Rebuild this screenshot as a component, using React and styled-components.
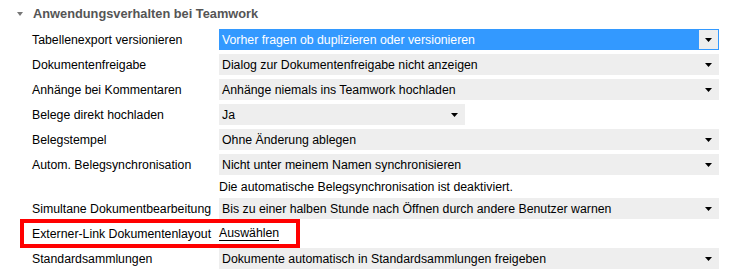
import React from "react";
import styled, { createGlobalStyle } from "styled-components";

const Global = createGlobalStyle`
  html, body { margin: 0; padding: 0; background: #fff; }
  body { font-family: "Liberation Sans", Arial, sans-serif; font-size: 12.3px; color: #000; }
`;

const Page = styled.div`
  width: 731px;
  height: 280px;
  overflow: hidden;
  background: #fff;
`;

const Header = styled.div`
  display: flex;
  align-items: center;
  height: 27px;
  padding-left: 17px;
  gap: 10px;
  font-weight: bold;
  font-size: 12.8px;
  color: #555;
`;

const Caret = styled.svg`
  width: 6px;
  height: 4px;
  flex: none;
`;

const Form = styled.div`
  display: grid;
  grid-template-columns: 187px 500px;
  row-gap: 4px;
  padding-left: 32px;
  padding-top: 2px;
`;

const Label = styled.div`
  height: 21px;
  display: flex;
  align-items: center;
  white-space: nowrap;
`;

const Select = styled.div`
  height: 21px;
  box-sizing: border-box;
  width: ${(p) => p.$width || "500px"};
  display: flex;
  align-items: stretch;
  background: ${(p) => (p.$active ? "#3399ff" : "#eeeeee")};
  border: 1px solid ${(p) => (p.$active ? "#3399ff" : "#eeeeee")};
  color: ${(p) => (p.$active ? "#fff" : "#000")};
`;

const SelectText = styled.div`
  flex: 1;
  display: flex;
  align-items: center;
  padding-left: 2px;
  white-space: nowrap;
  overflow: hidden;
`;

const SelectButton = styled.div`
  width: 19px;
  flex: none;
  display: flex;
  align-items: center;
  justify-content: center;
  background: ${(p) => (p.$active ? "#eeeeee" : "transparent")};
`;

const Note = styled.div`
  grid-column: 2;
  height: 15px;
  display: flex;
  align-items: center;
  white-space: nowrap;
`;

const LinkCell = styled.div`
  height: 21px;
  display: flex;
  align-items: center;
`;

const LinkText = styled.span`
  color: #000;
  line-height: 13px;
  border-bottom: 1px solid #000;
  cursor: pointer;
`;

const HighlightLabel = styled(Label)`
  position: relative;
  &::before {
    content: "";
    position: absolute;
    left: -12px;
    top: -4px;
    width: 280px;
    height: 29px;
    box-sizing: border-box;
    border: 4px solid #ff0000;
    pointer-events: none;
  }
`;

const Arrow = () => (
  <svg width="7" height="4" viewBox="0 0 7 4">
    <polygon points="0,0 7,0 3.5,4" fill="#000" />
  </svg>
);

const Dropdown = ({ value, active, width }) => (
  <Select $active={active} $width={width}>
    <SelectText>{value}</SelectText>
    <SelectButton $active={active}>
      <Arrow />
    </SelectButton>
  </Select>
);

export default function App() {
  return (
    <Page>
      <Global />
      <Header>
        <Caret viewBox="0 0 6 4">
          <polygon points="0,0 6,0 3,4" fill="#777" />
        </Caret>
        Anwendungsverhalten bei Teamwork
      </Header>
      <Form>
        <Label>Tabellenexport versionieren</Label>
        <Dropdown active value="Vorher fragen ob duplizieren oder versionieren" />
        <Label>Dokumentenfreigabe</Label>
        <Dropdown value="Dialog zur Dokumentenfreigabe nicht anzeigen" />
        <Label>Anhänge bei Kommentaren</Label>
        <Dropdown value="Anhänge niemals ins Teamwork hochladen" />
        <Label>Belege direkt hochladen</Label>
        <Dropdown value="Ja" width="246px" />
        <Label>Belegstempel</Label>
        <Dropdown value="Ohne Änderung ablegen" />
        <Label>Autom. Belegsynchronisation</Label>
        <Dropdown value="Nicht unter meinem Namen synchronisieren" />
        <Note>Die automatische Belegsynchronisation ist deaktiviert.</Note>
        <Label>Simultane Dokumentbearbeitung</Label>
        <Dropdown value="Bis zu einer halben Stunde nach Öffnen durch andere Benutzer warnen" />
        <HighlightLabel>Externer-Link Dokumentenlayout</HighlightLabel>
        <LinkCell>
          <LinkText>Auswählen</LinkText>
        </LinkCell>
        <Label>Standardsammlungen</Label>
        <Dropdown value="Dokumente automatisch in Standardsammlungen freigeben" />
      </Form>
    </Page>
  );
}
